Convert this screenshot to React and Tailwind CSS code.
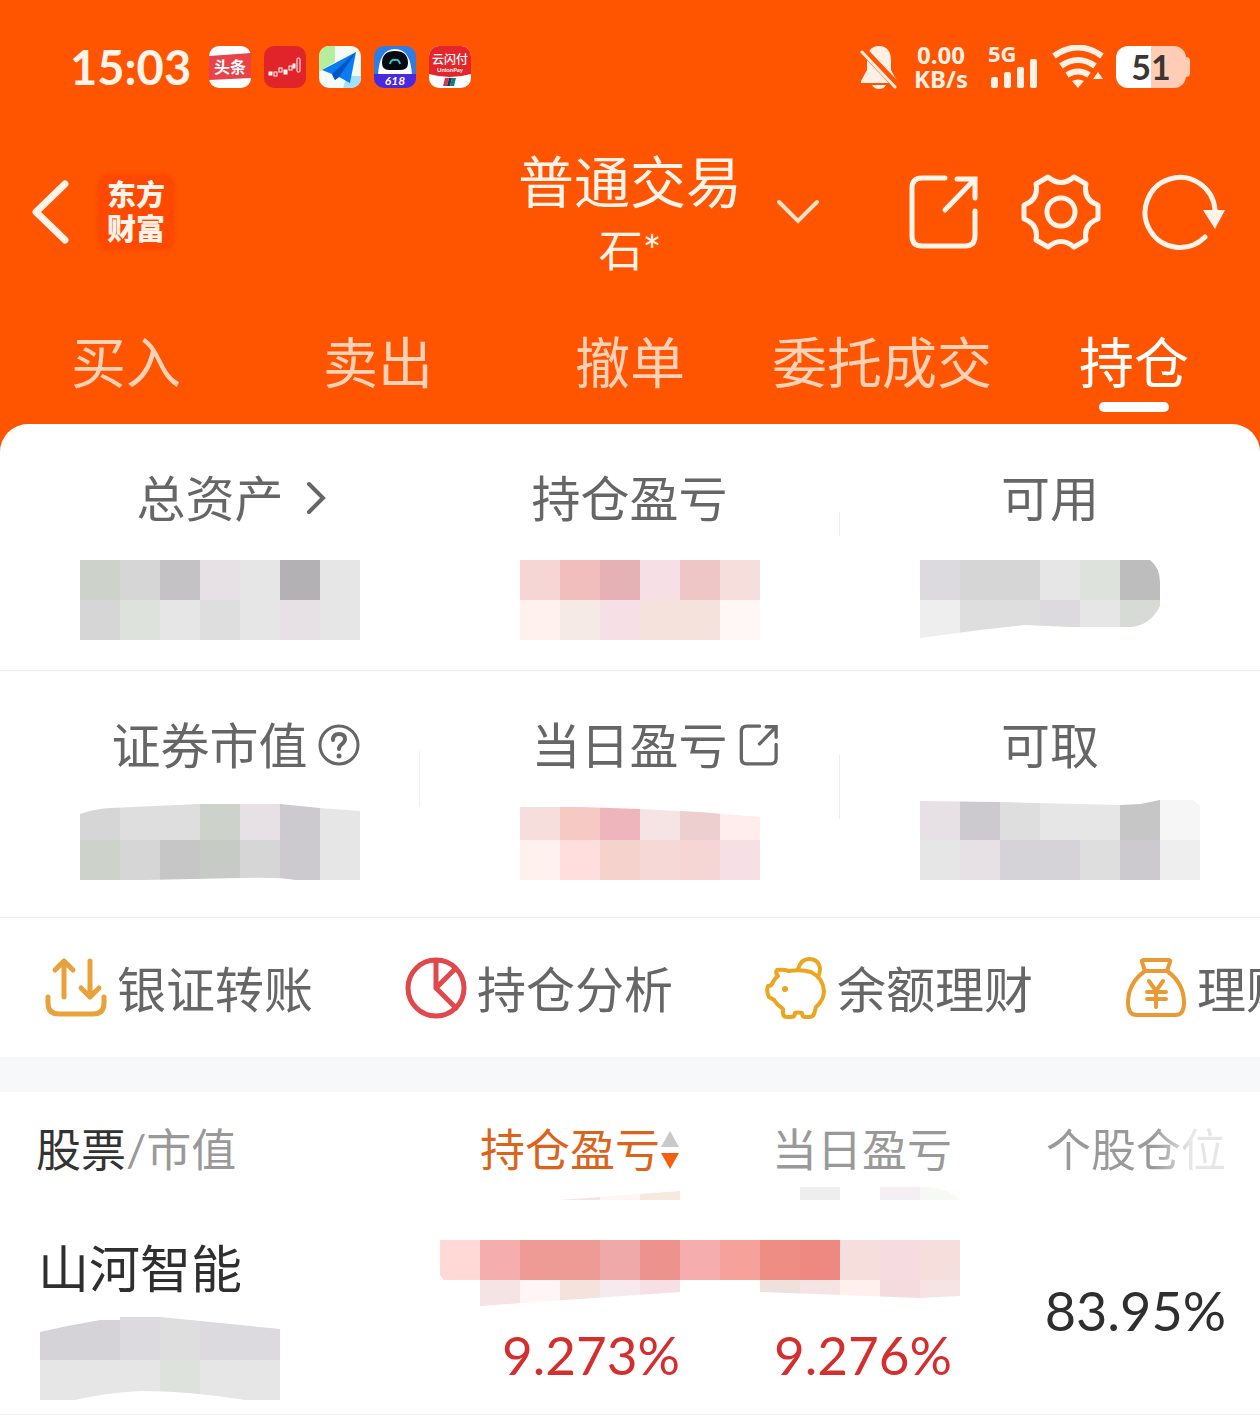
import { useState } from "react";

const TABS = ["买入", "卖出", "撤单", "委托成交", "持仓"];

// each band: top, height, first column x, then one colour per 40px block
const MOSAICS = {
  assets: {
    clip: "M0 8H280V88H0Z",
    bands: [
      { y: 8, h: 40, x: 0, colors: ["#cdd2cb", "#d6d6d6", "#c5c2c6", "#e7e1e6", "#e6e6e6", "#b4b1b5", "#e6e6e6"] },
      { y: 48, h: 40, x: 0, colors: ["#d6d6d6", "#dde2dc", "#e6e6e6", "#dedede", "#e6e6e6", "#e7e1e6", "#e6e6e6"] },
    ],
  },
  profit: {
    clip: "M20 8H260V88H20Z",
    bands: [
      { y: 8, h: 40, x: 20, colors: ["#f6d5d5", "#f1bdbd", "#e6b1b5", "#f6e0e6", "#eec6c6", "#f6dedc"] },
      { y: 48, h: 40, x: 20, colors: ["#fff2ee", "#f6eae6", "#f6e0e6", "#f6e2dc", "#f6e2dc", "#fff6f6"] },
    ],
  },
  available: {
    clip: "M0 8H230Q240 16 240 30V54Q230 74 210 75L150 75L105 73L60 78L0 86Z",
    bands: [
      { y: 8, h: 40, x: 0, colors: ["#dddadf", "#d6d6d6", "#d6d6d6", "#e6e6e6", "#dde2dc", "#bdbdbd"] },
      { y: 48, h: 40, x: 0, colors: ["#eeeeee", "#dedede", "#dedede", "#dddadf", "#e6e6e6", "#d6dbd5"] },
    ],
  },
  market: {
    clip: "M0 15Q14 10 30 9L120 5H200L240 9L280 12V81H215Q200 78 160 79L65 81H0Z",
    bands: [
      { y: 1, h: 40, x: 0, colors: ["#d6d6d6", "#dedede", "#dedede", "#cdd2cb", "#e7e1e6", "#cdcacf", "#e6e6e6"] },
      { y: 41, h: 40, x: 0, colors: ["#cdd2cb", "#d6d6d6", "#c6c6c6", "#c6cbc5", "#d6d6d6", "#cdcacf", "#e6e6e6"] },
    ],
  },
  today: {
    clip: "M20 8H80L140 10L200 13L260 18V81H20Z",
    bands: [
      { y: 1, h: 40, x: 20, colors: ["#f6dedc", "#f6c9c4", "#eeb6bc", "#f6e4e4", "#eecfcf", "#ffecec"] },
      { y: 41, h: 40, x: 20, colors: ["#fff2ee", "#ffdedd", "#f6d2cd", "#f6d9d6", "#f6d5d5", "#f6e0e6"] },
    ],
  },
  cash: {
    clip: "M0 2L80 3L200 6L220 5L240 1H273L280 7V81H0Z",
    bands: [
      { y: 1, h: 40, x: 0, colors: ["#e7e1e6", "#cdcacf", "#dedede", "#e6e6e6", "#e6e6e6", "#c6c6c6", "#f6f6f6"] },
      { y: 41, h: 40, x: 0, colors: ["#e6e6e6", "#e7e1e6", "#d6d3d8", "#d6d3d8", "#dedede", "#cdcacf", "#eeeeee"] },
    ],
  },
  stockValue: {
    clip: "M0 15Q30 8 60 3H80V0H120L240 12V83H205Q150 74 100 74Q65 76 35 83H0Z",
    bands: [
      { y: 0, h: 43, x: 0, colors: ["#d6d3d8", "#d6d3d8", "#dddadf", "#dedede", "#dddadf", "#dddadf"] },
      { y: 43, h: 40, x: 0, colors: ["#e6e6e6", "#e6e6e6", "#e6e6e6", "#dde2dc", "#e6e6e6", "#e6e6e6"] },
    ],
  },
  stockProfit: {
    clip: "M120 13L240 4V13ZM0 53H240V105L40 119V93H4L0 88Z",
    bands: [
      { y: 0, h: 13, x: 120, colors: ["#f6e4e0", "#fff6f2", "#f6eadc"] },
      { y: 53, h: 40, x: 0, colors: ["#ffd9d5", "#f6adad", "#ee9a95", "#ee9a95", "#eea9a8", "#ee928d"] },
      { y: 93, h: 27, x: 40, colors: ["#f6e4e4", "#fff4f6", "#f6e2dc", "#f6eaee", "#f6e0e6"] },
    ],
  },
  stockToday: {
    clip: "M120 0H160V13H120ZM200 0H250Q270 2 280 13H200ZM0 53H280V109L240 111L80 105V93H0Z",
    bands: [
      { y: 0, h: 13, x: 120, colors: ["#eeeeee", "#ffffff", "#f5eff5", "#f5faf5"] },
      { y: 53, h: 40, x: 0, colors: ["#f6adad", "#f7a19b", "#ee8d84", "#ee8982", "#f6dedc", "#f6dbe0", "#f6dedc"] },
      { y: 93, h: 27, x: 80, colors: ["#eee0da", "#f6e4e4", "#fff0ec", "#f6dbde", "#f6e4e4"] },
    ],
  },
};

function Mosaic({ name, width, height }) {
  const { clip, bands } = MOSAICS[name];
  return (
    <svg width={width} height={height} viewBox={`0 0 ${width} ${height}`} className="block shrink-0" aria-hidden="true">
      <clipPath id={`clip-${name}`}>
        <path d={clip} />
      </clipPath>
      <g clipPath={`url(#clip-${name})`} shapeRendering="crispEdges">
        {bands.map((band) =>
          band.colors.map((color, i) => (
            <rect key={`${band.y}-${i}`} x={band.x + i * 40} y={band.y} width="40" height={band.h} fill={color} />
          ))
        )}
      </g>
    </svg>
  );
}

function ShareIcon({ className, strokeWidth }) {
  return (
    <svg viewBox="0 0 72 76" className={className} fill="none" stroke="currentColor" strokeWidth={strokeWidth} strokeLinecap="round">
      <path d="M37 4H14Q4 4 4 14V62Q4 72 14 72H57Q67 72 67 62V37" />
      <path d="M49 5H67V24M66 6L37 36" />
    </svg>
  );
}

function AppIcons() {
  return (
    <div className="flex items-center gap-[13px]">
      <svg viewBox="0 0 42 42" className="size-[42px]">
        <rect width="42" height="42" rx="10" fill="#fff" />
        <path d="M0 10L42 7V32L0 34Z" fill="#e8424a" />
        <text x="21" y="27" textAnchor="middle" fontSize="16" fontWeight="700" fill="#fff">头条</text>
      </svg>
      <svg viewBox="0 0 42 42" className="size-[42px]">
        <rect width="42" height="42" rx="10" fill="#e02429" />
        <g fill="#fff" stroke="#fff">
          <rect x="5" y="26" width="3" height="3" />
          <rect x="10" y="26" width="3" height="4" fill="none" />
          <rect x="15" y="22" width="3" height="4" fill="none" />
          <rect x="20" y="24" width="3" height="4" />
          <rect x="25" y="20" width="3" height="4" fill="none" />
          <rect x="29" y="18" width="2" height="4" />
          <rect x="33" y="12" width="3" height="14" rx="1" fill="none" />
        </g>
      </svg>
      <svg viewBox="0 0 42 42" className="size-[42px]">
        <clipPath id="nav-app">
          <rect width="42" height="42" rx="10" />
        </clipPath>
        <g clipPath="url(#nav-app)">
          <rect width="42" height="42" fill="#f4fbf6" />
          <path d="M0 0H16V16L0 26Z" fill="#b5ee9c" />
          <path d="M28 30H42V42H24Z" fill="#9fe3f8" />
          <path d="M37 6L3 24L13 28L16 34L20 31L31 37Z" fill="#0b7bf0" />
          <path d="M37 6L13 28L16 34L20 31Z" fill="#0654c4" />
        </g>
      </svg>
      <svg viewBox="0 0 42 42" className="size-[42px]">
        <clipPath id="cloud-app">
          <rect width="42" height="42" rx="10" />
        </clipPath>
        <g clipPath="url(#cloud-app)">
          <rect width="42" height="42" fill="#2f7de4" />
          <path d="M4 30Q5 3 21 3Q37 3 38 30Z" fill="#fff" />
          <path d="M8 17Q8 5 21 5T34 17Q34 24 27 24H15Q8 24 8 17Z" fill="#050a12" />
          <path d="M16 18Q17 13 21 14Q25 13 26 18" fill="none" stroke="#3fc3c4" strokeWidth="2" />
          <rect y="28" width="42" height="14" fill="#4a28e0" />
          <text x="21" y="39" textAnchor="middle" fontSize="12" fontWeight="700" fontStyle="italic" fill="#fff">618</text>
        </g>
      </svg>
      <svg viewBox="0 0 42 42" className="size-[42px]">
        <clipPath id="pay-app">
          <rect width="42" height="42" rx="10" />
        </clipPath>
        <g clipPath="url(#pay-app)">
          <rect width="42" height="42" fill="#fff" />
          <path d="M0 0H42V28Q21 34 0 28Z" fill="#e3262c" />
          <text x="21" y="18" textAnchor="middle" fontSize="12" fontWeight="500" fill="#fff">云闪付</text>
          <text x="21" y="26" textAnchor="middle" fontSize="6" fontWeight="700" fill="#fff">UnionPay</text>
          <path d="M16 32H20L18 40H14Z" fill="#d8344e" />
          <path d="M20 32H23L21 40H18Z" fill="#1d3350" />
          <path d="M23 32H27L25 40H21Z" fill="#0d7f80" />
        </g>
      </svg>
    </div>
  );
}

function StatusBar() {
  return (
    <div className="flex h-[66px] items-center justify-between pr-[70px] pl-[70px]">
      <div className="flex items-center gap-[18px]">
        <span className="text-[47px] leading-none font-bold text-[#fff3ea]">15:03</span>
        <AppIcons />
      </div>
      <div className="flex items-center gap-3 text-[#fff0e6]">
        <svg viewBox="0 0 38 44" className="h-[44px] w-[38px]" fill="currentColor">
          <path d="M19 1C10 1 7 8 7 15V25L1 36V38H37V36L31 25V15C31 8 28 1 19 1ZM12 40H26Q24 44 19 44T12 40Z" />
          <path d="M1 3L37 41" stroke="#ff5500" strokeWidth="8" />
          <path d="M2 7L35 42" stroke="currentColor" strokeWidth="3" strokeLinecap="round" />
        </svg>
        <p className="ml-1 text-center font-['Noto_Sans',sans-serif] text-[24px] leading-6 font-bold">
          0.00
          <br />
          KB/s
        </p>
        <svg viewBox="0 0 52 44" className="ml-2 h-[44px] w-[52px] overflow-visible" fill="currentColor">
          <text x="0" y="17" fontSize="22" fontWeight="700" fontFamily="Noto Sans, sans-serif">5G</text>
          <rect x="3" y="32" width="7" height="11" rx="2" />
          <rect x="16" y="27" width="7" height="16" rx="2" />
          <rect x="29" y="22" width="7" height="21" rx="2" />
          <rect x="42" y="14" width="7" height="29" rx="2" />
        </svg>
        <svg viewBox="0 0 52 44" className="h-[44px] w-[52px]" fill="none" stroke="currentColor" strokeWidth="6">
          <path d="M2 11Q26 -6 50 11" />
          <path d="M9 21Q26 9 43 21" />
          <path d="M15 30Q26 23 37 30" />
          <path d="M20 36Q26 33 32 36L26 43Z" fill="currentColor" stroke="none" />
          <path d="M46 27L51 34H41Z" fill="currentColor" stroke="none" />
        </svg>
        <div className="flex items-center">
          <div className="flex h-[42px] w-[70px] items-center justify-center rounded-xl bg-linear-to-r from-white from-50% to-[#ffcdb5] to-50% text-[34px] leading-none font-bold text-[#3d3532]">
            51
          </div>
          <div className="h-5 w-1 rounded-r bg-[#ffcdb5]" />
        </div>
      </div>
    </div>
  );
}

function NavBar() {
  return (
    <div className="grid grid-cols-[1fr_auto_1fr] items-center text-[#fff3ea]">
      <div className="flex items-center gap-7 pl-8">
        <button type="button" aria-label="返回">
          <svg viewBox="0 0 38 64" className="h-16 w-[38px]" fill="none" stroke="currentColor" strokeWidth="7" strokeLinecap="round" strokeLinejoin="round">
            <path d="M33 4L4 32L33 60" />
          </svg>
        </button>
        <div className="flex size-[76px] flex-col items-center justify-center rounded-xl bg-[#ff4800] text-[29px] leading-[34px] font-black shadow-[0_0_4px_#ff4800]">
          <span>东方</span>
          <span>财富</span>
        </div>
      </div>
      <div className="flex flex-col items-center pt-2">
        <h1 className="text-[56px] leading-[68px]">普通交易</h1>
        <p className="text-[44px] leading-[68px]">石*</p>
      </div>
      <div className="flex items-center justify-between pr-[34px] pl-[34px]">
        <button type="button" aria-label="切换账户">
          <svg viewBox="0 0 44 26" className="h-[26px] w-[44px]" fill="none" stroke="#ffe3c4" strokeWidth="4" strokeLinecap="round">
            <path d="M3 3L22 22L41 3" />
          </svg>
        </button>
        <div className="flex items-center gap-[41px]">
          <button type="button" aria-label="分享">
            <ShareIcon className="h-[76px] w-[72px]" strokeWidth={5} />
          </button>
          <button type="button" aria-label="设置">
            <svg viewBox="0 0 80 76" className="h-[76px] w-[80px]" fill="none" stroke="currentColor" strokeWidth="5" strokeLinejoin="round">
              <path d="M27 3Q40 14 53 3L65 10Q62 26 77 31V45Q62 50 65 66L53 73Q40 62 27 73L15 66Q18 50 3 45V31Q18 26 15 10Z" />
              <circle cx="40" cy="38" r="14" />
            </svg>
          </button>
          <button type="button" aria-label="刷新">
            <svg viewBox="0 0 84 76" className="h-[76px] w-[84px]" fill="none" stroke="currentColor" strokeWidth="5" strokeLinecap="round">
              <path d="M63 63A35 35 0 1 1 73 36" />
              <path d="M61 36H83L73 55Z" fill="currentColor" stroke="none" />
            </svg>
          </button>
        </div>
      </div>
    </div>
  );
}

function SummaryCell({ label, icon, mosaic, divider }) {
  return (
    <div className="flex h-[246px]">
      <div className="flex-1 pt-[42px]">
        <div className="grid grid-cols-[1fr_auto_1fr] items-center">
          <span />
          <span className="text-[49px] leading-[64px]">{label}</span>
          {icon}
        </div>
        <div className="mt-[22px] pl-20">
          <Mosaic name={mosaic} width={280} height={88} />
        </div>
      </div>
      {divider}
    </div>
  );
}

function Summary() {
  return (
    <section className="text-[#666]">
      <div className="grid grid-cols-3 border-b border-[#ececec]">
        <SummaryCell
          label="总资产"
          mosaic="assets"
          icon={
            <svg viewBox="0 0 20 34" className="ml-[22px] h-[34px] w-5" fill="none" stroke="currentColor" strokeWidth="4" strokeLinecap="round">
              <path d="M3 3L17 17L3 31" />
            </svg>
          }
        />
        <SummaryCell label="持仓盈亏" mosaic="profit" divider={<div className="mt-[88px] h-6 w-px bg-[#eee]" />} />
        <SummaryCell label="可用" mosaic="available" />
      </div>
      <div className="grid grid-cols-3 border-b border-[#ececec]">
        <SummaryCell
          label="证券市值"
          mosaic="market"
          divider={<div className="mt-20 h-14 w-px bg-[#eee]" />}
          icon={
            <button type="button" aria-label="说明" className="ml-[10px] w-[42px]">
              <svg viewBox="0 0 42 42" className="size-[42px]" fill="none" stroke="currentColor" strokeWidth="4" strokeLinecap="round">
                <circle cx="21" cy="21" r="19" strokeWidth="3" />
                <path d="M15 16Q15 10 21 10T27 15C27 20 21 20 21 25" />
                <circle cx="21" cy="32" r="2.500" fill="currentColor" stroke="none" />
              </svg>
            </button>
          }
        />
        <SummaryCell
          label="当日盈亏"
          mosaic="today"
          divider={<div className="mt-[84px] h-16 w-px bg-[#eee]" />}
          icon={
            <button type="button" aria-label="查看当日盈亏" className="ml-[10px] w-[42px]">
              <ShareIcon className="h-[42px] w-[42px]" strokeWidth={6} />
            </button>
          }
        />
        <SummaryCell label="可取" mosaic="cash" />
      </div>
    </section>
  );
}

const ACTIONS = [
  {
    label: "银证转账",
    icon: (
      <svg viewBox="0 0 62 62" className="size-[62px] shrink-0" fill="none" stroke="#e9a13b" strokeWidth="5" strokeLinecap="round" strokeLinejoin="round">
        <path d="M3 40V46Q3 57 14 57H48Q59 57 59 46V40" />
        <path d="M19 40V4M10 13L19 4L28 13" />
        <path d="M45 4V40M36 31L45 40L54 31" />
      </svg>
    ),
  },
  {
    label: "持仓分析",
    icon: (
      <svg viewBox="0 0 62 62" className="size-[62px] shrink-0" fill="none" stroke="#e0484c" strokeWidth="5" strokeLinecap="round">
        <circle cx="31" cy="31" r="28" />
        <path d="M31 4V31L51 51M31 31L50 12" />
      </svg>
    ),
  },
  {
    label: "余额理财",
    icon: (
      <svg viewBox="0 0 62 62" className="size-[62px] shrink-0" fill="none" stroke="#eba51f" strokeWidth="4" strokeLinecap="round" strokeLinejoin="round">
        <path d="M12 13Q18 12 24 14Q36 12 46 15Q58 21 59 34Q59 43 51 50L49 57Q48 60 44 60H40Q37 60 37 56Q33 55 30 56Q30 60 26 60H22Q18 60 18 56V52Q12 48 9 43L4 40Q1 34 3 29Q7 29 8 25Q10 21 13 19Q10 16 12 13Z" />
        <path d="M33 12Q36 2 44 2Q54 2 55 12Q55 16 53 20" />
        <circle cx="20" cy="32" r="3" fill="#eba51f" stroke="none" />
      </svg>
    ),
  },
  {
    label: "理财",
    icon: (
      <svg viewBox="0 0 62 62" className="size-[62px] shrink-0" fill="none" stroke="#e99a35" strokeWidth="4" strokeLinecap="round" strokeLinejoin="round">
        <path d="M20 14L17 5Q16 3 19 3H43Q46 3 45 5L42 14Z" />
        <path d="M20 14Q3 26 3 46Q3 58 12 58H50Q59 58 59 46Q59 26 42 14" />
        <path d="M24 24L31 34L38 24M22 35H41M22 42H41M31 35V50" />
      </svg>
    ),
  },
];

function QuickActions() {
  return (
    <nav className="flex h-[139px] items-center overflow-hidden pl-[45px] text-[#666]">
      {ACTIONS.map((action) => (
        <a key={action.label} href="#" className="flex w-[360px] shrink-0 items-center gap-[10px]">
          {action.icon}
          <span className="pt-[2px] text-[49px] leading-[64px] whitespace-nowrap">{action.label}</span>
        </a>
      ))}
    </nav>
  );
}

function Holdings() {
  return (
    <table className="w-full table-fixed border-b border-[#f0f0f0]">
      <colgroup>
        <col />
        <col className="w-[240px]" />
        <col className="w-[280px]" />
        <col className="w-[300px]" />
      </colgroup>
      <thead>
        <tr className="h-[95px] align-top text-[45px] leading-[56px] whitespace-nowrap text-[#999]">
          <th scope="col" className="pt-[30px] pl-9 text-left font-normal">
            <span className="text-[#333]">股票</span>/市值
          </th>
          <th scope="col" className="pt-[30px] font-normal" aria-sort="descending">
            <button type="button" className="ml-auto flex items-center text-[#d9641c]">
              持仓盈亏
              <svg viewBox="0 0 20 40" className="h-10 w-5 shrink-0">
                <path d="M10 1L19 17H1Z" fill="#c9c9c9" />
                <path d="M1 23H19L10 39Z" fill="#f2600f" />
              </svg>
            </button>
          </th>
          <th scope="col" className="pt-[30px] pr-2 text-right font-normal">当日盈亏</th>
          <th scope="col" className="pt-[30px] pr-[34px] text-right font-normal">
            <span className="bg-linear-to-r from-[#999] from-60% to-[#e6e6e6] to-80% bg-clip-text text-transparent">个股仓位</span>
          </th>
        </tr>
      </thead>
      <tbody>
        <tr className="align-top">
          <td className="pt-[50px] pl-[38px]">
            <div className="text-[51px] leading-[64px] text-[#2f2f2f]">山河智能</div>
            <div className="mt-4 pl-[2px]">
              <Mosaic name="stockValue" width={240} height={83} />
            </div>
          </td>
          <td className="text-right text-[53px] leading-[64px] text-[#d32f2f]">
            <Mosaic name="stockProfit" width={240} height={120} />
            <div className="pt-4 pb-[27px]">9.273%</div>
          </td>
          <td className="text-right text-[53px] leading-[64px] text-[#d32f2f]">
            <Mosaic name="stockToday" width={280} height={120} />
            <div className="pt-4 pr-2 pb-[27px]">9.276%</div>
          </td>
          <td className="pt-[92px] pr-[34px] text-right text-[54px] leading-[64px] text-[#2f2f2f]">83.95%</td>
        </tr>
      </tbody>
    </table>
  );
}

export default function App() {
  const [activeTab, setActiveTab] = useState("持仓");

  return (
    <div className="flex min-h-screen flex-col overflow-hidden bg-[#ff5500] font-['Lato','Noto_Sans_CJK_SC',sans-serif]">
      <header className="pt-[34px]">
        <StatusBar />
        <div className="mt-10">
          <NavBar />
        </div>
        <div role="tablist" className="mt-[38px] grid grid-cols-5 pb-3">
          {TABS.map((tab) => (
            <button
              key={tab}
              type="button"
              role="tab"
              aria-selected={tab === activeTab}
              onClick={() => setActiveTab(tab)}
              className={`flex flex-col items-center text-[55px] leading-[80px] whitespace-nowrap ${
                tab === activeTab ? "text-white" : "text-[#ffd2b8]"
              }`}
            >
              {tab}
              <span className={`h-[10px] w-[70px] rounded-full ${tab === activeTab ? "bg-white" : "bg-transparent"}`} />
            </button>
          ))}
        </div>
      </header>
      <main className="flex-1 rounded-t-[28px] bg-white">
        <Summary />
        <QuickActions />
        <div className="h-[35px] bg-[#f7f8fa]" />
        <Holdings />
      </main>
    </div>
  );
}
